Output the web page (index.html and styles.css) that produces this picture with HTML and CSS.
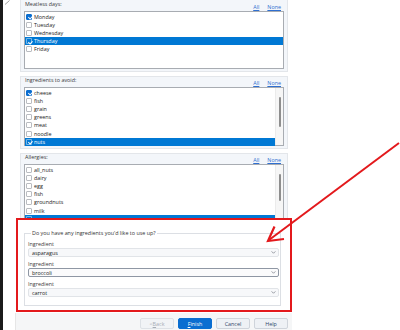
FILE: index.html
```html
<!DOCTYPE html>
<html>
<head>
<meta charset="utf-8">
<link rel="stylesheet" href="styles.css">
</head>
<body>
<div class="screen">
  <div class="strip"></div>
  <div class="content">
    <section class="card card1">
      <div class="head"><span class="lbl">Meatless days:</span><span class="links"><a>All</a><a>None</a></span></div>
      <div class="list l1">
        <div class="rows">
          <div class="row"><span class="cb on"></span>Monday</div>
          <div class="row"><span class="cb"></span>Tuesday</div>
          <div class="row"><span class="cb"></span>Wednesday</div>
          <div class="row sel"><span class="cb on"></span>Thursday</div>
          <div class="row"><span class="cb"></span>Friday</div>
        </div>
      </div>
    </section>
    <section class="card card2">
      <div class="head"><span class="lbl">Ingredients to avoid:</span><span class="links"><a>All</a><a>None</a></span></div>
      <div class="list l2">
        <div class="rows">
          <div class="row"><span class="cb on"></span>cheese</div>
          <div class="row"><span class="cb"></span>fish</div>
          <div class="row"><span class="cb"></span>grain</div>
          <div class="row"><span class="cb"></span>greens</div>
          <div class="row"><span class="cb"></span>meat</div>
          <div class="row"><span class="cb"></span>noodle</div>
          <div class="row sel"><span class="cb on"></span>nuts</div>
        </div>
        <div class="sb"><div class="thumb t2"></div></div>
      </div>
    </section>
    <section class="card card3">
      <div class="head"><span class="lbl">Allergies:</span><span class="links"><a>All</a><a>None</a></span></div>
      <div class="list l3">
        <div class="rows">
          <div class="row"><span class="cb"></span>all_nuts</div>
          <div class="row"><span class="cb"></span>dairy</div>
          <div class="row"><span class="cb"></span>egg</div>
          <div class="row"><span class="cb"></span>fish</div>
          <div class="row"><span class="cb"></span>groundnuts</div>
          <div class="row"><span class="cb"></span>milk</div>
          <div class="row sel"><span class="cb on"></span>sesame</div>
        </div>
        <div class="sb"><div class="thumb t3"></div></div>
      </div>
    </section>
    <section class="group">
      <fieldset class="fs">
        <legend>Do you have any ingredients you'd like to use up?</legend>
        <div class="field">
          <div class="flabel">Ingredient</div>
          <div class="input"><span>asparagus</span><svg class="chev" viewBox="0 0 6 4" width="5" height="3"><polyline points="0.5,0.5 3,3 5.5,0.5" fill="none" stroke="#6a6f78" stroke-width="0.9"/></svg></div>
        </div>
        <div class="field">
          <div class="flabel">Ingredient</div>
          <div class="input focus"><span>broccoli</span><svg class="chev" viewBox="0 0 6 4" width="5" height="3"><polyline points="0.5,0.5 3,3 5.5,0.5" fill="none" stroke="#6a6f78" stroke-width="0.9"/></svg></div>
        </div>
        <div class="field">
          <div class="flabel">Ingredient</div>
          <div class="input"><span>carrot</span><svg class="chev" viewBox="0 0 6 4" width="5" height="3"><polyline points="0.5,0.5 3,3 5.5,0.5" fill="none" stroke="#6a6f78" stroke-width="0.9"/></svg></div>
        </div>
      </fieldset>
    </section>
    <footer class="footer">
      <button class="btn disabled">&lt; <u>B</u>ack</button>
      <button class="btn primary"><u>F</u>inish</button>
      <button class="btn">Cancel</button>
      <button class="btn">Help</button>
    </footer>
  </div>
  <div class="annot"></div>
  <svg class="overlay" width="400" height="330" viewBox="0 0 400 330">
    <line x1="5" y1="4.5" x2="9.5" y2="0.5" stroke="#a0a0a0" stroke-width="1"/>
    <line x1="399" y1="143" x2="269" y2="240" stroke="#e3191c" stroke-width="2"/>
    <polyline points="274.5,226.5 268,241 284,239" fill="none" stroke="#e3191c" stroke-width="2.2" stroke-linejoin="miter"/>
  </svg>
</div>
</body>
</html>
```
FILE: styles.css
```css
* { box-sizing: border-box; margin: 0; padding: 0; }
html, body { width: 400px; height: 330px; overflow: hidden; background: #fff; }
body { font-family: "Open Sans", "Noto Sans", sans-serif; font-size: 5.4px; color: #222; }

.screen { position: relative; display: flex; width: 400px; height: 330px; }
.strip { width: 3px; flex: none; background: #1b1b1b; }
.content { margin-left: 12px; width: 277px; display: flex; flex-direction: column; }

.card { margin: 0 4px 4px 5px; background: #f3f6fa; border: 1px solid #e3e6ea; padding: 0 3px 2px 3px; }
.card1 { border-top: 0; }
.card3 { margin-bottom: 0; padding-bottom: 0; border-bottom: 0; height: 67px; overflow: hidden; }

.head { height: 10px; display: flex; justify-content: space-between; align-items: flex-start; padding: 0 3px 0 1px; }
.card1 .head { height: 11px; padding-top: 1px; }
.lbl { line-height: 6px; color: #3a3a3a; }
.links { display: flex; gap: 8px; padding-top: 2.5px; line-height: 6px; }
.links a { color: #2f6fd0; text-decoration: underline; }

.list { background: #fff; border: 1px solid #a8acb2; display: flex; padding-top: 0.5px; }
.l1 { height: 58px; }
.l2 { height: 59px; }
.l3 { height: 60px; }
.rows { flex: 1; }
.row { height: 8.2px; display: flex; align-items: center; padding-left: 1px; line-height: 8px; color: #222; }
.row.sel { background: #0078d4; color: #fff; }

.cb { width: 6px; height: 6px; flex: none; margin-right: 2px; border: 0.8px solid #b9bcc1; border-radius: 1px; background: #fff; position: relative; }
.cb.on { background: #0a6ed1; border-color: #0a6ed1; }
.sel .cb.on { background: #0078d4; border-color: rgba(255,255,255,0.45); }
.cb.on::after { content: ""; position: absolute; left: 1.6px; top: 0.4px; width: 1.6px; height: 3px; border-right: 0.9px solid #fff; border-bottom: 0.9px solid #fff; transform: rotate(45deg); }

.sb { width: 8px; flex: none; background: #f6f6f6; border-left: 1px solid #ebebeb; margin-top: -0.5px; }
.thumb { width: 2px; margin-left: 2.5px; background: #8e8e8e; border-radius: 1px; }
.t2 { margin-top: 9px; height: 30px; }
.t3 { margin-top: 9px; height: 27px; }

.group { margin: 0 4px 0 5px; height: 93px; background: #fff; }
.fs { margin: 10px 7px 0 4px; border: 1px solid #dcdfe4; padding: 5px 1px 8px 3px; }
.fs legend { margin-left: 3px; padding: 0 1px; line-height: 6px; color: #333; }
.field { margin-bottom: 4px; }
.field:last-child { margin-bottom: 0; }
.flabel { line-height: 7px; height: 7px; color: #3a3a3a; }
.input { height: 9px; display: flex; align-items: center; justify-content: space-between; padding: 0 2px 0 3px; background: #f7f8fa; border: 1px solid #e1e4e8; border-radius: 2px; color: #222; }
.input.focus { border-color: #8f97a4; background: #fbfbfc; }
.chev { display: block; }

.footer { flex: 1; background: #f5f6f7; border-left: 1px solid #e6e6e6; display: flex; justify-content: flex-end; align-items: flex-start; gap: 4px; padding: 5px 4px 0 0; }
.btn { width: 34px; height: 11px; border-radius: 2px; border: 1px solid #cfd4db; background: #eef1f5; color: #31476a; font-family: inherit; font-size: 5.4px; display: flex; align-items: center; justify-content: center; }
.btn.disabled { color: #a6acb5; background: #f1f3f6; border-color: #dde1e6; }
.btn.primary { background: #0a6ed1; border-color: #0a6ed1; color: #fff; }

.annot { position: absolute; left: 16px; top: 218px; width: 276px; height: 94px; border: 2px solid #e3191c; }
.overlay { position: absolute; left: 0; top: 0; pointer-events: none; }
```
